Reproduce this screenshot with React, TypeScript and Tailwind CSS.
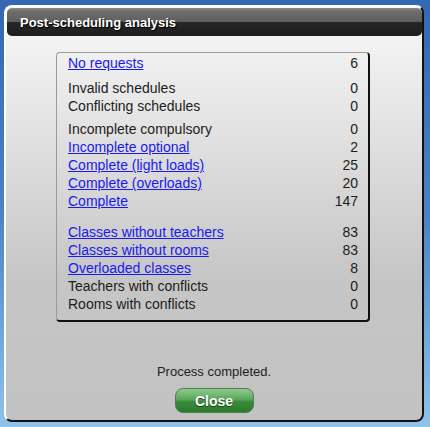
import React from "react";

type Row = { label: string; value: string; link?: boolean; gap?: string };

const rows: Row[] = [
  { label: "No requests", value: "6", link: true },
  { label: "Invalid schedules", value: "0", gap: "mt-[7px]" },
  { label: "Conflicting schedules", value: "0" },
  { label: "Incomplete compulsory", value: "0", gap: "mt-[6px]" },
  { label: "Incomplete optional", value: "2", link: true },
  { label: "Complete (light loads)", value: "25", link: true },
  { label: "Complete (overloads)", value: "20", link: true },
  { label: "Complete", value: "147", link: true },
  { label: "Classes without teachers", value: "83", link: true, gap: "mt-[14px]" },
  { label: "Classes without rooms", value: "83", link: true },
  { label: "Overloaded classes", value: "8", link: true },
  { label: "Teachers with conflicts", value: "0" },
  { label: "Rooms with conflicts", value: "0" },
];

export default function App() {
  return (
    <div
      className="w-[430px] h-[427px] overflow-hidden bg-[linear-gradient(to_bottom,#3567b2_0%,#4a82c6_50%,#8fc3ea_100%)] pl-[4px] pt-[5px]"
      style={{ fontFamily: '"Liberation Sans", Arial, sans-serif' }}
    >
      <div className="w-[420px] h-[417px] rounded-[8px] border-t-2 border-l-2 border-r-2 border-b-2 border-t-white border-l-white border-r-[#111] border-b-[#111] bg-[linear-gradient(to_bottom,#f8f8f8_0%,#e6e6e6_25%,#c6c6c6_65%,#c2c2c2_100%)] flex flex-col">
        <div className="ml-[1px] mt-[1px] w-[415px] h-[28px] rounded-[5px] bg-[linear-gradient(to_bottom,#8a8a8a_0%,#6c6c6c_12%,#606060_48%,#262626_52%,#1e1e1e_100%)] flex items-center pl-[13px]">
          <span className="text-white font-bold text-[13px] leading-none [text-shadow:1px_1px_1px_#000]">
            Post-scheduling analysis
          </span>
        </div>

        <div className="ml-[50px] mt-[16px] w-[314px] h-[270px] rounded-[4px] border-t border-l border-t-[#9a9a9a] border-l-[#9a9a9a] border-r-2 border-b-2 border-r-[#111] border-b-[#111] pl-[11px] pr-[10px] pt-[2px] flex flex-col">
          {rows.map((r) => (
            <div
              key={r.label}
              className={`flex justify-between text-[14px] leading-[17.8px] ${r.gap ?? ""}`}
            >
              {r.link ? (
                <a className="text-[#1a1aee] underline cursor-pointer">{r.label}</a>
              ) : (
                <span className="text-[#1c1c1c]">{r.label}</span>
              )}
              <span className="text-[#1c1c1c]">{r.value}</span>
            </div>
          ))}
        </div>

        <div className="mt-[42px] text-center text-[13px] leading-[16px] text-[#1c1c1c]">
          Process completed.
        </div>

        <div className="mt-[8px] flex justify-center">
          <button className="w-[79px] h-[25px] rounded-[8px] border border-[#4f7f4f] bg-[linear-gradient(to_bottom,#8fcb8f_0%,#5aa65a_45%,#3a8c3a_55%,#2a7a2a_100%)] text-white font-bold text-[14px] leading-none [text-shadow:0_1px_1px_#1a3a1a]">
            Close
          </button>
        </div>
      </div>
    </div>
  );
}
